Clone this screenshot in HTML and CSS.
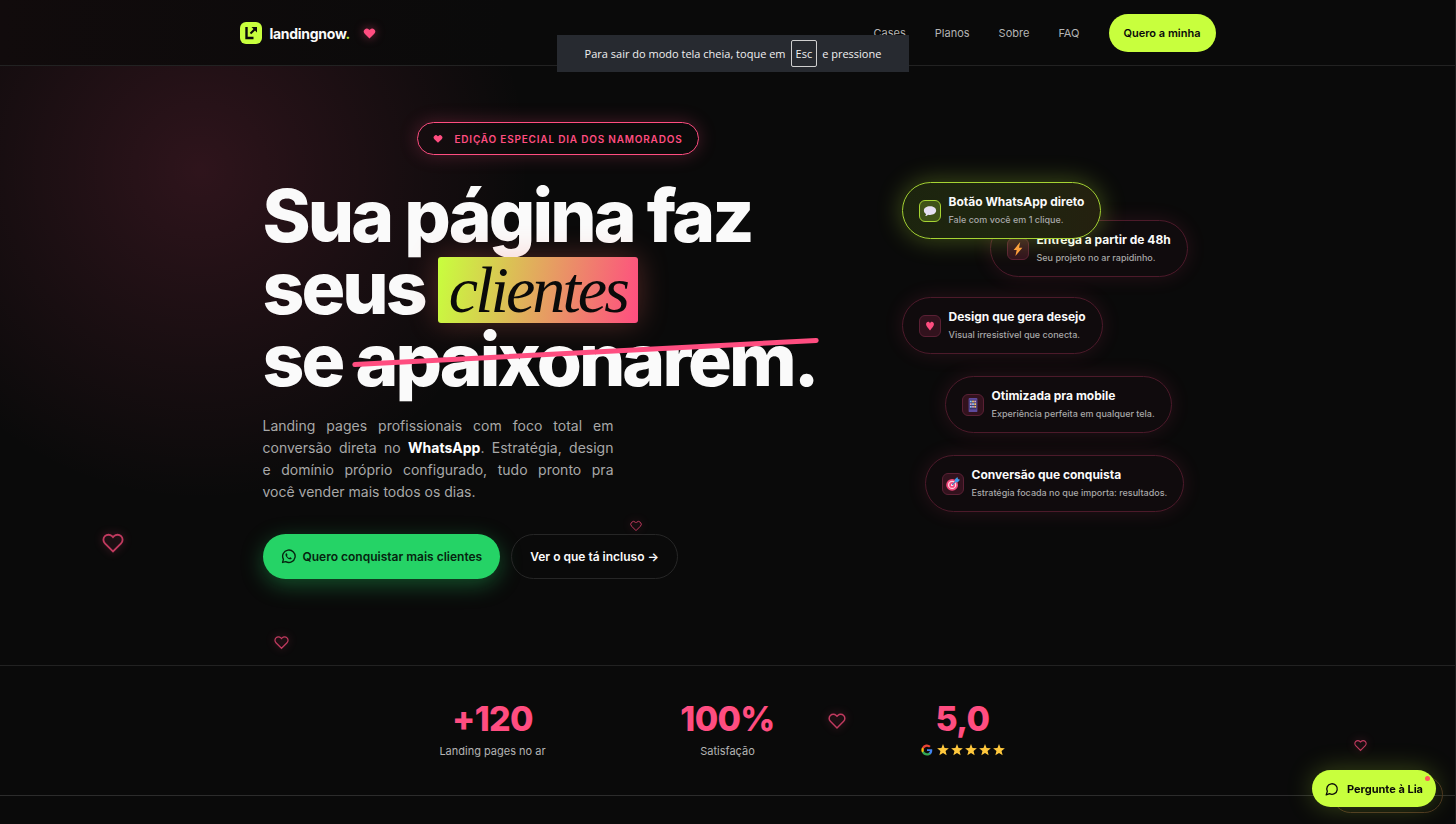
FILE: index.html
```html
<!DOCTYPE html>
<html lang="pt-BR">
<head>
  <meta charset="UTF-8">
  <meta name="viewport" content="width=device-width, initial-scale=1.0">
  <title>landingnow.</title>
  <link rel="stylesheet" href="styles.css">
</head>
<body>
  <!-- shared shapes -->
  <svg class="sprite" aria-hidden="true">
    <symbol id="heart" viewBox="0 0 24 24">
      <path d="M20.84 4.61a5.5 5.5 0 0 0-7.78 0L12 5.67l-1.06-1.06a5.5 5.5 0 0 0-7.78 7.78L12 21.23l8.84-8.84a5.5 5.5 0 0 0 0-7.78z"/>
    </symbol>
    <symbol id="star" viewBox="0 0 24 24">
      <path d="M12 0l3.1 8 8.7.6-6.700 5.400 2.200 8.700L12 18l-7.300 4.700 2.200-8.700L.2 8.600l8.700-.6z"/>
    </symbol>
  </svg>

  <header class="header">
    <div class="header-inner">
      <a class="logo" href="#">
        <svg class="logo-mark" viewBox="0 0 22 22">
          <rect width="22" height="22" rx="6" fill="#c8ff3d"/>
          <path d="M6.500 5v11h7" fill="none" stroke="#0a0a0a" stroke-width="2.400"/>
          <path d="M10.500 11.500l5-5" fill="none" stroke="#0a0a0a" stroke-width="2"/>
          <path d="M11.500 5H17v5.500z" fill="#0a0a0a"/>
        </svg>
        <span class="logo-text">landingnow<span class="dot">.</span></span>
        <svg class="logo-heart"><use href="#heart"/></svg>
      </a>
      <nav class="nav">
        <a href="#cases">Cases</a>
        <a href="#planos">Planos</a>
        <a href="#sobre">Sobre</a>
        <a href="#faq">FAQ</a>
        <a class="nav-cta" href="#planos">Quero a minha</a>
      </nav>
    </div>
  </header>

  <main>
    <section class="hero">
      <div class="hero-inner">
        <div class="hero-left">
          <div class="badge">
            <svg class="badge-heart"><use href="#heart"/></svg>
            <span>Edição especial dia dos namorados</span>
          </div>
          <h1>Sua página faz<br>seus <em class="highlight">clientes</em><br>se <span class="strike">apaixonarem.</span></h1>
          <p class="lead">Landing pages profissionais com foco total em conversão direta no <strong>WhatsApp</strong>. Estratégia, design e&nbsp;domínio próprio configurado, tudo pronto pra você&nbsp;vender mais todos os dias.</p>
          <div class="actions">
            <a class="btn btn-whats" href="#contato">
              <svg class="btn-icon" viewBox="0 0 24 24" fill="none" stroke="currentColor">
                <path d="M2.500 21.500l1.400-5A10 10 0 1 1 7.500 20.200z" stroke-width="2.200" stroke-linejoin="round"/>
                <path d="M8.700 6.800c-.6 0-1.500.8-1.500 2.200 0 3 4.500 7.500 7.600 7.500 1.300 0 2.300-.9 2.300-1.900 0-.4-2.300-1.600-2.700-1.500-.4.100-.9 1.300-1.300 1.200-1.500-.5-3-2-3.500-3.200-.1-.4.900-1 .8-1.500-.1-.6-.9-2.800-1.700-2.800z" fill="currentColor" stroke="none"/>
              </svg>
              Quero conquistar mais clientes
            </a>
            <a class="btn btn-ghost" href="#incluso">Ver o que tá incluso →</a>
          </div>
        </div>

        <ul class="features">
          <li class="feature feature-active">
            <span class="feature-icon">
              <svg viewBox="0 0 16 16"><path d="M8 2.500c4 0 7 2 7 5s-3 5-7 5c-.8 0-1.500 0-2.200-.2-.8 1-2 1.500-3.300 1.500.7-.7 1-1.500.9-2.300C1.900 10.600 1 9.200 1 7.500c0-3 3-5 7-5z" fill="#e6e0f2"/></svg>
            </span>
            <div>
              <h3>Botão WhatsApp direto</h3>
              <p>Fale com você em 1 clique.</p>
            </div>
          </li>
          <li class="feature feature-speed">
            <span class="feature-icon">
              <svg viewBox="0 0 16 16"><path d="M10.500 0L3 9h3.500L5 16l8-9.500H9.200z" fill="#ff9a3d"/></svg>
            </span>
            <div>
              <h3>Entrega a partir de 48h</h3>
              <p>Seu projeto no ar rapidinho.</p>
            </div>
          </li>
          <li class="feature">
            <span class="feature-icon">
              <svg viewBox="0 0 16 16"><path d="M8 13C6 10.500 3.500 8.500 3.500 6 3.500 3 7 2 8 5c1-3 4.500-2 4.500 1 0 2.500-2.500 4.500-4.500 7z" fill="#ff4d80"/></svg>
            </span>
            <div>
              <h3>Design que gera desejo</h3>
              <p>Visual irresistível que conecta.</p>
            </div>
          </li>
          <li class="feature feature-mobile">
            <span class="feature-icon">
              <svg viewBox="0 0 16 16">
                <rect x="3" y="0" width="10" height="16" rx="1" fill="#5d4a9c"/>
                <rect x="4" y="2" width="8" height="11" fill="#39346b"/>
                <g fill="#8fc7f5"><rect x="4.500" y="3" width="2" height="2"/><rect x="7" y="6" width="2" height="2"/><rect x="4.500" y="9" width="2" height="2"/></g>
                <g fill="#f5c86a"><rect x="7" y="3" width="2" height="2"/><rect x="9.500" y="6" width="2" height="2"/><rect x="9.500" y="9" width="2" height="2"/></g>
                <g fill="#d8a2c4"><rect x="9.500" y="3" width="2" height="2"/><rect x="4.500" y="6" width="2" height="2"/><rect x="7" y="9" width="2" height="2"/></g>
              </svg>
            </span>
            <div>
              <h3>Otimizada pra mobile</h3>
              <p>Experiência perfeita em qualquer tela.</p>
            </div>
          </li>
          <li class="feature feature-target">
            <span class="feature-icon">
              <svg viewBox="0 0 16 16">
                <circle cx="7" cy="9" r="6.800" fill="#f0487c"/>
                <circle cx="7" cy="9" r="4.800" fill="#ffd3e0"/>
                <circle cx="7" cy="9" r="3.300" fill="#f0487c"/>
                <circle cx="7" cy="9" r="1.400" fill="#ffe3ec"/>
                <path d="M7 9l5-5" stroke="#2c7fc4" stroke-width="1.200"/>
                <path d="M10 6l.2-3.500L13 0l.7 2.300 2.300.7-2.500 3z" fill="#3f9be8"/>
              </svg>
            </span>
            <div>
              <h3>Conversão que conquista</h3>
              <p>Estratégia focada no que importa: resultados.</p>
            </div>
          </li>
        </ul>
      </div>
    </section>

    <section class="stats">
      <div class="stats-inner">
        <div class="stat">
          <strong>+120</strong>
          <span>Landing pages no ar</span>
        </div>
        <div class="stat">
          <strong>100%</strong>
          <span>Satisfação</span>
        </div>
        <div class="stat">
          <strong>5,0</strong>
          <span class="rating">
            <svg class="google" viewBox="0 0 48 48">
              <path fill="#4285f4" d="M45 24.500c0-1.600-.1-2.700-.4-4H24v7.600h12c-.5 3-2.300 5.500-5 7.200v6h8C43 37 45 31.500 45 24.500z"/>
              <path fill="#34a853" d="M24 46c6 0 11-2 15-5.500l-7.500-5.800c-2 1.400-4.500 2.300-7.500 2.300-5.700 0-10.600-3.800-12.400-9H4v6A22 22 0 0 0 24 46z"/>
              <path fill="#fbbc05" d="M11.600 28a13 13 0 0 1 0-8.200v-6H4a22 22 0 0 0 0 20z"/>
              <path fill="#ea4335" d="M24 10.800c3.300 0 6.200 1.100 8.500 3.300l6.400-6.400A22 22 0 0 0 4 13.800l7.600 6c1.800-5.200 6.700-9 12.400-9z"/>
            </svg>
            <svg class="star"><use href="#star"/></svg>
            <svg class="star"><use href="#star"/></svg>
            <svg class="star"><use href="#star"/></svg>
            <svg class="star"><use href="#star"/></svg>
            <svg class="star"><use href="#star"/></svg>
          </span>
        </div>
      </div>
    </section>
  </main>

  <!-- floating hearts -->
  <div class="hearts" aria-hidden="true">
    <svg class="float-heart heart-a"><use href="#heart"/></svg>
    <svg class="float-heart heart-b"><use href="#heart"/></svg>
    <svg class="float-heart heart-c"><use href="#heart"/></svg>
    <svg class="float-heart heart-d"><use href="#heart"/></svg>
    <svg class="float-heart heart-e"><use href="#heart"/></svg>
  </div>

  <div class="chat-dock">
    <button class="chat" type="button">
      <svg class="chat-icon" viewBox="0 0 24 24" fill="none" stroke="currentColor" stroke-width="2.200" stroke-linecap="round" stroke-linejoin="round">
        <path d="M7.900 20A9 9 0 1 0 4 16.100L2 22z"/>
      </svg>
      Pergunte à Lia
    </button>
  </div>

  <div class="toast" role="status">
    <span>Para sair do modo tela cheia, toque em</span>
    <kbd>Esc</kbd>
    <span>e pressione</span>
  </div>
</body>
</html>
```
FILE: styles.css
```css
:root {
  --bg: #0a0a0a;
  --lime: #c8ff3d;
  --pink: #ff4d80;
  --muted: #a8a8a8;
  --line: #222222;
}
* {
  box-sizing: border-box;
  margin: 0;
  padding: 0;
}
body {
  position: relative;
  min-height: 100vh;
  background-color: var(--bg);
  border-right: 1px solid #1c1c1c;
  color: #fafafa;
  font-family: Inter, "Liberation Sans", sans-serif;
  overflow-x: hidden;
}
a {
  color: inherit;
  text-decoration: none;
}
.sprite {
  display: none;
}

/* header */
.header {
  background: linear-gradient(90deg, #110b0c, #0a0a0a 35%);
  border-bottom: 1px solid var(--line);
}
.header-inner {
  display: flex;
  align-items: center;
  justify-content: space-between;
  max-width: 976px;
  margin: 0 auto;
  padding: 14px 0 13px;
}
.logo {
  display: flex;
  align-items: center;
  gap: 8px;
}
.logo-mark {
  width: 22px;
  height: 22px;
}
.logo-text {
  font-size: 14px;
  font-weight: 700;
  letter-spacing: -0.02em;
}
.dot {
  color: var(--lime);
}
.logo-heart {
  width: 13px;
  height: 13px;
  margin-left: 5px;
  fill: var(--pink);
  filter: drop-shadow(0 0 5px rgba(255, 77, 128, 0.5));
}
.nav {
  display: flex;
  align-items: center;
  gap: 29px;
  font-size: 11px;
  color: #b4b4b4;
}
.nav-cta {
  padding: 12px 15px;
  border-radius: 20px;
  background-color: var(--lime);
  color: #0a0a0a;
  font-weight: 600;
  line-height: 14px;
}

/* hero */
.hero {
  padding: 56px 24px 86px;
  background: radial-gradient(circle at 200px 104px, rgba(255, 77, 128, 0.15), rgba(255, 77, 128, 0.07) 170px, transparent 330px);
}
.hero-inner {
  display: grid;
  grid-template-columns: 1fr 291px;
  gap: 48px;
  max-width: 930px;
  margin: 0 auto;
}
.hero-left {
  display: flex;
  flex-direction: column;
}
.badge {
  display: flex;
  align-items: center;
  align-self: center;
  gap: 11px;
  height: 33px;
  padding: 0 15px;
  border: 1px solid var(--pink);
  border-radius: 17px;
  color: var(--pink);
  font-size: 10px;
  font-weight: 600;
  letter-spacing: 0.08em;
  text-transform: uppercase;
  box-shadow: 0 0 18px rgba(255, 77, 128, 0.25);
}
.badge-heart {
  width: 10px;
  height: 10px;
  fill: var(--pink);
}
h1 {
  margin-top: 25px;
  font-size: 73px;
  font-weight: 800;
  line-height: 72px;
  letter-spacing: -0.04em;
  white-space: nowrap;
}
.highlight {
  display: inline-block;
  position: relative;
  margin: -4px 0 -8px;
  padding: 0 11px;
  border-radius: 3px;
  background: linear-gradient(100deg, var(--lime), var(--pink));
  color: #0a0a0a;
  font-family: "Liberation Serif", serif;
  font-size: 66px;
  font-weight: 400;
  line-height: 66px;
  vertical-align: 2px;
  box-shadow: 0 0 30px rgba(255, 110, 100, 0.3);
}
.strike {
  position: relative;
}
.strike::after {
  content: "";
  position: absolute;
  left: -3px;
  right: -3px;
  top: 39%;
  height: 5px;
  border-radius: 3px;
  background-color: var(--pink);
  transform: rotate(-3deg);
}
.lead {
  max-width: 351px;
  margin-top: 19px;
  color: var(--muted);
  font-size: 14px;
  line-height: 22px;
  text-align: justify;
}
.lead strong {
  color: #ffffff;
}
.actions {
  display: flex;
  gap: 11px;
  margin-top: 31px;
}
.btn {
  display: flex;
  align-items: center;
  gap: 7px;
  height: 45px;
  padding: 0 18px;
  border-radius: 23px;
  font-size: 12px;
  font-weight: 600;
}
.btn-whats {
  background-color: #25d366;
  color: #06240f;
  box-shadow: 0 6px 22px rgba(37, 211, 102, 0.35);
}
.btn-icon {
  width: 15px;
  height: 15px;
}
.btn-ghost {
  border: 1px solid #262626;
}

/* feature pills */
.features {
  display: flex;
  flex-direction: column;
  align-items: flex-start;
  gap: 22px;
  padding-top: 60px;
  list-style: none;
}
.feature {
  display: flex;
  align-items: center;
  gap: 8px;
  height: 57px;
  padding: 0 16px;
  border: 1px solid #4c1a2a;
  border-radius: 29px;
  background-color: #100b0d;
  box-shadow: 0 0 20px rgba(255, 77, 128, 0.12);
  white-space: nowrap;
}
.feature-active {
  position: relative;
  z-index: 1;
  border-color: #a6d433;
  background: linear-gradient(100deg, #1c240e, #1f2610 50%, #24200f);
  box-shadow: 0 0 26px rgba(200, 255, 61, 0.3);
}
.feature-speed {
  margin: -41px 0 -2px 88px;
}
.feature-mobile {
  margin-left: 43px;
}
.feature-target {
  margin-left: 23px;
}
.feature-icon {
  display: flex;
  align-items: center;
  justify-content: center;
  width: 22px;
  height: 22px;
  border: 1px solid #5a2034;
  border-radius: 6px;
  background-color: #32121d;
}
.feature-icon svg {
  width: 14px;
  height: 14px;
}
.feature-active .feature-icon {
  border-color: #a6d433;
  background-color: #3f5218;
}
.feature h3 {
  font-size: 12px;
  font-weight: 700;
  line-height: 18px;
}
.feature p {
  color: var(--muted);
  font-size: 9px;
  font-weight: 500;
  line-height: 18px;
}

/* stats */
.stats {
  padding: 35px 24px;
  border-top: 1px solid var(--line);
  border-bottom: 1px solid #2c2c2c;
}
.stats-inner {
  display: grid;
  grid-template-columns: repeat(3, 1fr);
  max-width: 705px;
  margin: 0 auto;
}
.stat {
  display: flex;
  flex-direction: column;
  align-items: center;
  gap: 6px;
}
.stat strong {
  color: var(--pink);
  font-size: 34px;
  font-weight: 800;
  line-height: 36px;
  letter-spacing: -0.02em;
}
.stat span {
  color: #b4b4b4;
  font-size: 11px;
  line-height: 17px;
}
.stat .rating {
  display: flex;
  align-items: center;
  gap: 2px;
  height: 14px;
}
.google {
  width: 12px;
  height: 12px;
  margin-right: 2px;
}
.star {
  width: 12px;
  height: 12px;
  fill: #ffc83d;
}

/* floating hearts */
.float-heart {
  position: absolute;
  fill: none;
  stroke: #c03a5f;
  stroke-width: 2;
  overflow: visible;
  filter: drop-shadow(0 0 4px rgba(255, 77, 128, 0.4));
}
.heart-a {
  left: 7%;
  top: 532px;
  width: 22px;
  height: 22px;
}
.heart-b {
  left: 274px;
  top: 635px;
  width: 15px;
  height: 15px;
}
.heart-c {
  left: 630px;
  top: 520px;
  width: 12px;
  height: 12px;
}
.heart-d {
  left: 828px;
  top: 712px;
  width: 18px;
  height: 18px;
}
.heart-e {
  right: 88px;
  top: 739px;
  width: 13px;
  height: 13px;
}

/* chat button */
.chat-dock {
  position: fixed;
  right: 20px;
  bottom: 17px;
}
.chat-dock::before {
  content: "";
  position: absolute;
  inset: 6px -7px -6px 20px;
  border: 1px solid #4a3020;
  border-radius: 19px;
}
.chat {
  position: relative;
  display: flex;
  align-items: center;
  gap: 8px;
  height: 37px;
  padding: 0 13px;
  border: none;
  border-radius: 19px;
  background-color: var(--lime);
  color: #0a0a0a;
  font-family: inherit;
  font-size: 11px;
  font-weight: 700;
  box-shadow: 0 0 26px rgba(200, 255, 61, 0.25);
  cursor: pointer;
}
.chat::after {
  content: "";
  position: absolute;
  top: 6px;
  right: 6px;
  width: 5px;
  height: 5px;
  border-radius: 50%;
  background-color: #ff5a5a;
}
.chat-icon {
  width: 14px;
  height: 14px;
}

/* fullscreen notice */
.toast {
  position: fixed;
  top: 35px;
  left: 10px;
  right: 0;
  display: flex;
  align-items: center;
  gap: 5px;
  width: fit-content;
  height: 37px;
  margin: 0 auto;
  padding: 0 28px;
  background-color: #272a30;
  color: #f0f0f0;
  font-family: "Open Sans", sans-serif;
  font-size: 11px;
  white-space: nowrap;
}
.toast kbd {
  padding: 4px;
  border: 1px solid #d0d0d0;
  border-radius: 2px;
  font-family: inherit;
  line-height: 17px;
}
```
